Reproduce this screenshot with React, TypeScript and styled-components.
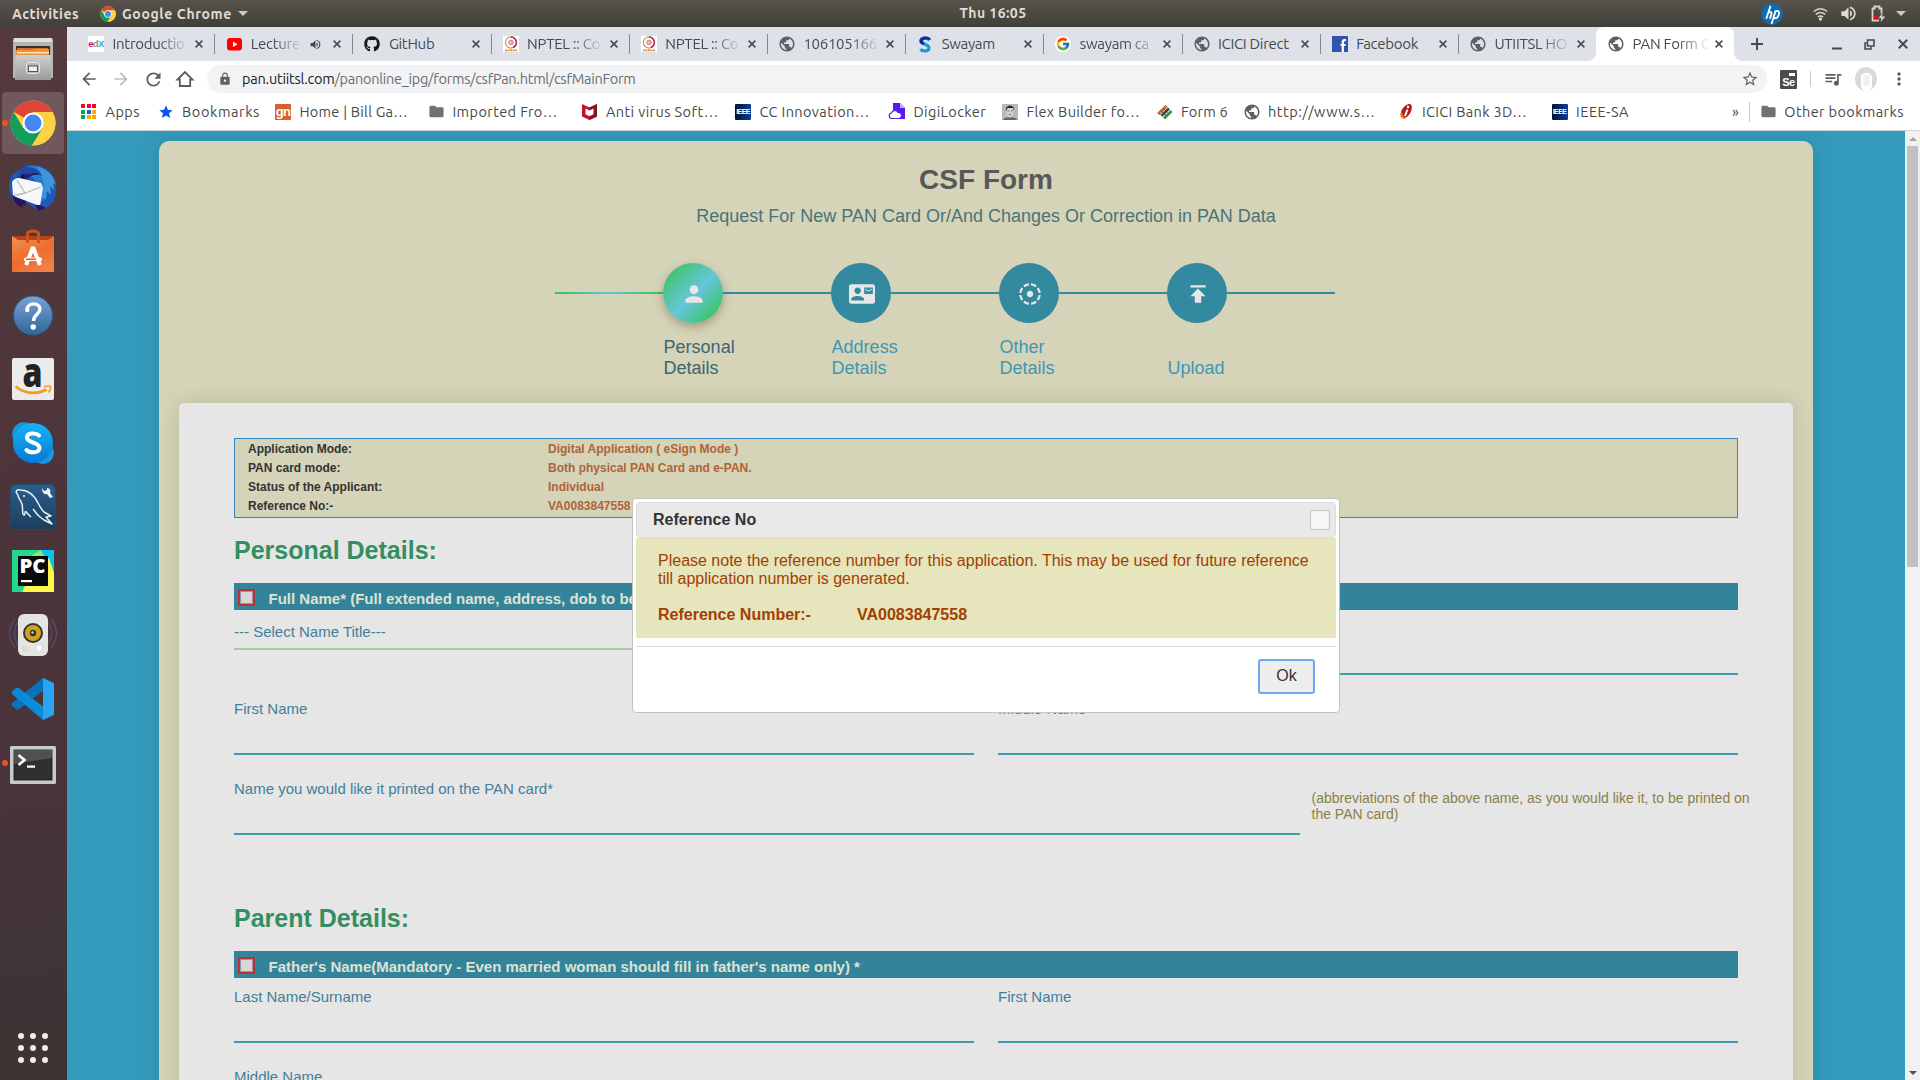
import React, { useLayoutEffect, useRef, useState } from "react";
import styled, { createGlobalStyle, css } from "styled-components";
import {
  MdPerson, MdContactMail, MdFilterTiltShift, MdPublish, MdArrowBack, MdArrowForward,
  MdRefresh, MdLock, MdStarBorder, MdQueueMusic, MdMoreVert, MdVolumeUp, MdStar, MdFolder, MdPublic,
} from "react-icons/md";
import { FaGithub } from "react-icons/fa";
import { FcGoogle } from "react-icons/fc";

const UI = `Ubuntu, "Open Sans", "Noto Sans", sans-serif`;
const SANS = `"Liberation Sans", Arial, sans-serif`;

const Global = createGlobalStyle`
  * { box-sizing: border-box; }
  body { margin: 0; overflow: hidden; font-family: ${SANS}; }
  svg { display: block; flex: none; overflow: visible; }
`;

/* ---------- shell ---------- */
const Desktop = styled.div`
  width: 1920px; height: 1080px; overflow: hidden;
  display: grid; grid-template: 27px 1053px / 67px 1853px;
`;
const TopBar = styled.header`
  grid-column: 1 / 3; display: grid; grid-template-columns: 1fr auto 1fr;
  align-items: center; padding: 0 14px 0 12px;
  background: linear-gradient(#57534b, #403f3a);
  color: #dfdbd2; font: 600 14px/20px ${UI};
`;
const BarGroup = styled.div<{ $end?: boolean }>`
  display: flex; align-items: center; height: 26px;
  justify-content: ${(p) => (p.$end ? "flex-end" : "flex-start")};
`;
const Gap = styled.span<{ $w: number }>`flex: none; width: ${(p) => p.$w}px;`;
const Caret = styled.i`
  border: 5px solid transparent; border-top: 5.5px solid #cfcbc2; border-bottom: 0;
`;
const Clock = styled.div`padding-left: 68px; height: 22px;`;

const Dock = styled.nav`
  display: flex; flex-direction: column;
  background: linear-gradient(172deg, #543a3c 0%, #4c343a 45%, #48343a 72%, #403436 88%, #3e3434 100%);
`;
const Slot = styled.div<{ $active?: boolean; $open?: boolean }>`
  position: relative; height: 64px; flex: none; display: flex; align-items: center; justify-content: center;
  padding-right: 1px;
  ${(p) => p.$active && css`
    height: 62px; margin: 1px 3px 1px 2px; border-radius: 4px; background: #6f595c; padding: 0;
  `}
  ${(p) => p.$open && css`
    &::before { content: ""; position: absolute; left: ${p.$active ? 0 : 2}px; top: calc(50% - 3px);
      width: 6px; height: 6px; border-radius: 50%; background: #e95420; }
  `}
`;
const DockTop = styled.div`display: flex; flex-direction: column; & > :last-child { padding-top: 3px; }`;
const DotGrid = styled.div`
  margin: auto 0 17px 18px; display: grid; grid-template-columns: repeat(3, 6px); gap: 6px;
  i { width: 6px; height: 6px; border-radius: 50%; background: #f0eeec; }
`;

/* ---------- browser chrome ---------- */
const Browser = styled.div`display: flex; flex-direction: column; min-width: 0;`;
const TabStrip = styled.div`
  height: 34px; flex: none; background: #dee1e8; display: flex; padding-left: 9px;
`;
const TabBox = styled.div<{ $active?: boolean; $line?: boolean }>`
  position: relative; width: 138.2px; flex: none; height: 34px; display: flex; align-items: center;
  padding: 0 11px 0 12px; font: 15px/20px ${UI}; color: #45494d;
  ${(p) => p.$line && css`
    &::after { content: ""; position: absolute; right: -1px; top: 7px; width: 1px; height: 20px; background: #84878c; }
  `}
  ${(p) => p.$active && css`
    background: #fff; border-radius: 8px 8px 0 0;
    &::before, &::after { content: ""; position: absolute; bottom: 0; width: 8px; height: 8px; }
    &::before { left: -8px; background: radial-gradient(circle at 0 0, transparent 7.5px, #fff 8px); }
    &::after { right: -8px; background: radial-gradient(circle at 100% 0, transparent 7.5px, #fff 8px); }
  `}
`;
const Favicon = styled.span`width: 16px; flex: none; display: flex; justify-content: center;`;
const TabTitle = styled.span<{ $fade?: boolean }>`
  flex: 1; min-width: 0; margin-left: 8.5px; white-space: nowrap; overflow: hidden; letter-spacing: -0.3px;
  ${(p) => p.$fade && css`mask-image: linear-gradient(90deg, #000 calc(100% - 30px), transparent);`}
`;
const WindowTools = styled.div`flex: 1; display: flex; align-items: center; color: #45494d;`;

const Toolbar = styled.div`
  height: 36px; flex: none; background: #fff; display: flex; align-items: center; color: #5a5e63; padding-left: 12px;
`;
const Omnibox = styled.div`
  width: 1560px; height: 28px; border-radius: 14px; background: #f1f3f4; display: flex; align-items: center;
  padding: 0 8px 0 11px; color: #5f6368; margin-left: 13px;
`;
const Url = styled.div`display: flex; margin-left: 10px; flex: 1; font: 14.5px/20px ${UI}; color: #6a6e73;`;
const Host = styled.span`color: #202124;`;
const SeBadge = styled.span`
  width: 17px; height: 19px; background: #4b4c4e; color: #fff; font: bold 11px/24px ${SANS}; text-align: center;
  border-radius: 1px; letter-spacing: -0.5px; position: relative;
  &::before { content: ""; position: absolute; right: 2px; top: 3px; width: 6px; height: 3px; background: #fff; }
`;
const VLine = styled.i<{ $h: number }>`width: 1px; height: ${(p) => p.$h}px; background: #c8cacd;`;
const Avatar = styled.span`
  width: 22px; height: 24px; border-radius: 50%; background: #d9d9d9; display: flex; justify-content: center; align-items: flex-end;
  overflow: hidden;
  i { width: 11px; height: 18px; border-radius: 5px 5px 6px 6px; border: 2px solid #fff; border-bottom-width: 5px; background: #eef3f6; }
`;
const Bookmarks = styled.div`
  height: 34px; flex: none; background: #fff; border-bottom: 1px solid #d0d6da; display: flex; align-items: center;
  padding: 0 14px 4px 14px; font: 14.5px/20px ${UI}; color: #45494d;
`;
const Mark = styled.div<{ $w: number }>`
  width: ${(p) => p.$w}px; flex: none; display: flex; align-items: center;
`;
const MarkIcon = styled.span`width: 24.5px; flex: none; display: flex;`;
const AppsGrid = styled.span`
  display: grid; grid-template-columns: repeat(3, 4px); gap: 1.5px;
`;
const AppsDot = styled.i<{ $c: string }>`height: 4px; background: ${(p) => p.$c};`;
const Square = styled.span<{ $bg: string; $fs: number; $fg?: string }>`
  width: 16px; height: 16px; overflow: hidden; background: ${(p) => p.$bg}; color: ${(p) => p.$fg || "#fff"};
  font: bold ${(p) => p.$fs}px/16px ${SANS}; text-align: center; letter-spacing: -0.6px; border-radius: 1px; flex: none;
`;
const Tint = styled.span<{ $c: string }>`color: ${(p) => p.$c};`;
const FitSpan = styled.span`white-space: nowrap; display: inline-block;`;

function Fit({ w, children }: { w: number; children: string }) {
  const ref = useRef<HTMLSpanElement>(null);
  const [ls, setLs] = useState(0);
  useLayoutEffect(() => {
    const el = ref.current;
    if (el) setLs((w - el.getBoundingClientRect().width) / children.length);
  }, [w, children]);
  return <FitSpan ref={ref} style={{ letterSpacing: ls }}>{children}</FitSpan>;
}

/* ---------- page ---------- */
const Viewport = styled.div`flex: 1; min-height: 0; display: flex; position: relative;`;
const Page = styled.main`
  width: 1838px; height: 949px; overflow: hidden; background: #349bbc; padding: 10px 92px 0;
`;
const Card = styled.section`
  height: 1200px; background: #d5d3b8; border-radius: 10px; padding: 24px 20px 0;
  box-shadow: 0 0 26px rgba(0, 60, 80, 0.17);
`;
const Title = styled.h1`margin: 0; text-align: center; color: #585858; font: bold 28px/30px ${SANS};`;
const Subtitle = styled.p`margin: 10px 0 0; text-align: center; color: #487378; font: 18px/22px ${SANS};`;
const Stepper = styled.div`display: flex; margin: 36px 0 24px 376px;`;
const Connector = styled.i<{ $done?: boolean }>`
  width: 108px; height: 2px; flex: none; margin-top: ${(p) => (p.$done ? 29 : 0)}px;
  background: ${(p) => (p.$done ? "linear-gradient(90deg, #37c257, #63c3dc, #37c257)" : "#33899f")};
`;
const Step = styled.div`width: 168px;`;
const StepRow = styled.div`display: flex; align-items: center;`;
const Circle = styled.span<{ $done?: boolean }>`
  width: 60px; height: 60px; flex: none; border-radius: 50%; display: flex; align-items: center; justify-content: center;
  color: #e6e7e6; font-size: 26px; background: #33899f; padding: 1px 0 0 1px;
  ${(p) => p.$done && css`
    background: linear-gradient(135deg, #3cc468 10%, #67c5da 52%, #3cc468 88%);
    box-shadow: 0 4px 10px rgba(90, 80, 50, 0.4);
  `}
`;
const StepLabel = styled.div<{ $done?: boolean }>`
  width: 90px; height: 42px; margin: 14px 0 0 0.6px; display: flex; align-items: flex-end;
  font: 18px/21px ${SANS}; color: ${(p) => (p.$done ? "#3a6675" : "#3d97b6")};
`;
const Panel = styled.div`
  height: 1000px; background: #e6e6e6; border-radius: 5px; padding: 35px 55px 0;
  box-shadow: 0 0 18px rgba(90, 85, 40, 0.2);
`;
const InfoBox = styled.dl`
  margin: 0; height: 80px; border: 1px solid #3488b8; background: #d5d3b8; padding: 1px 0 0 13px;
  display: grid; grid-template-columns: 300px 1fr; grid-auto-rows: 19px; font: bold 12px/19px ${SANS}; color: #333;
  dd { margin: 0; color: #ad6538; }
`;
const SectionTitle = styled.h2<{ $top: number }>`
  margin: ${(p) => p.$top}px 0 18px; color: #358e62; font: bold 25px/30px ${SANS};
`;
const Band = styled.div`
  height: 27px; background: #33849a; color: #dfe2d3; display: flex; align-items: flex-start; padding: 6px 4px 0;
  font: bold 15px/18px ${SANS};
`;
const Check = styled.span`
  width: 17px; height: 17px; border: 2px solid #c22f30; background: #d6d6d6; margin-right: 13.5px;
  box-shadow: inset 0 0 0 1px #8b9ba3;
`;
const BandText = styled.span`margin-top: 1px;`;
const Row = styled.div<{ $h: number }>`height: ${(p) => p.$h}px; display: flex; align-items: flex-end; gap: 24px;`;
const Field = styled.div<{ $w?: number }>`
  width: ${(p) => p.$w || 740}px; flex: none; height: 55px; border-bottom: 2px solid #429aae; color: #41809a;
  font: 15px/18px ${SANS};
`;
const Select = styled(Field)`height: 27px; margin-bottom: 25px; border-color: #adcaa0;`;
const Note = styled.div`
  width: 440px; flex: none; margin: 0 0 13px -12.5px; color: #8a8046; font: 14px/16px ${SANS};
`;
const Scroll = styled.div`
  width: 15px; background: #f1f1f1; display: flex; flex-direction: column; align-items: center; padding: 6px 0 5px;
`;
const Arrow = styled.i<{ $down?: boolean }>`
  border: 4px solid transparent;
  ${(p) => p.$down ? "border-top-color: #505050; border-bottom: 0;" : "border-bottom-color: #a3a3a3; border-top: 0;"}
`;
const Thumb = styled.i`width: 11px; height: 421px; margin: 5px 0 auto; background: #c1c1c1;`;

/* ---------- dialog ---------- */
const Dialog = styled.div`
  position: absolute; left: 565px; top: 367px; width: 708px; height: 215px; padding: 3px;
  background: #fff; border: 1px solid #c2c2c2; border-radius: 4px; color: #333; font: 16px/18px ${SANS};
`;
const DialogHead = styled.div`
  height: 36px; background: #e9e9e9; border: 1px solid #dddddd; border-radius: 4px; padding: 0 5px 0 16px;
  display: flex; align-items: center; justify-content: space-between; font-weight: bold;
`;
const CloseBox = styled.span`width: 20px; height: 20px; border: 1px solid #c5c5c5; border-radius: 3px; background: #f6f6f6;`;
const DialogBody = styled.div`
  height: 100px; background: #e7e5bb; color: #a24004; padding: 14px 22px; margin-bottom: 8px;
`;
const RefLine = styled.div`margin-top: 18px; font-weight: bold; display: grid; grid-template-columns: 199px 1fr;`;
const DialogFoot = styled.div`
  border-top: 1px solid #dddddd; padding: 12px 21px 0; display: flex; justify-content: flex-end;
`;
const OkButton = styled.button`
  width: 57px; height: 35px; border: 2px solid #6fa6f0; border-radius: 3px; background: #ededed; color: #333;
  font: 16px/18px ${SANS}; padding: 0 0 2px;
`;

/* ---------- drawings ---------- */
const ChromeLogo = ({ s }: { s: number }) => (
  <svg width={s} height={s} viewBox="0 0 48 48">
    <circle cx="24" cy="24" r="23.5" fill="#fdd045" />
    <path d="M24 24 3.7 12.2A23.5 23.5 0 0 1 44.4 12.5H24z" fill="#dc4538" />
    <path d="M3.7 12.2A23.5 23.5 0 0 0 23 47.5L33.8 29.5 24 24 14 29.5z" fill="#129e5a" />
    <path d="M24 12.5h20.4A23.5 23.5 0 0 1 23 47.5L34 29.8z" fill="#fdd045" />
    <circle cx="24" cy="24" r="11" fill="#fff" /><circle cx="24" cy="24" r="8.8" fill="#4487f3" />
  </svg>
);
const FilesIcon = () => (
  <svg width="44" height="46" viewBox="0 0 44 46">
    <path d="M3 2h38l1 6v34H2V8z" fill="#b5b5b3" /><path d="M3 2h38l1 4H2z" fill="#dededc" />
    <path d="M5 10h34v9H5z" fill="#3a3025" /><path d="M6 12h31v7H6z" fill="#d96f20" />
    <path d="M5 14h17l3-1h13v6H5z" fill="#f0913e" /><path d="M6 16h32v1.5H6z" fill="#ffe2ba" />
    <path d="M4 19h36v25H4z" fill="url(#fg)" />
    <rect x="15.500" y="26.500" width="13" height="11" rx="2.500" fill="#b5b5b5" stroke="#e5e5e5" />
    <rect x="17.500" y="30" width="9" height="5.500" fill="#eee" stroke="#555" />
    <defs><linearGradient id="fg" x2="0" y2="1"><stop stopColor="#cfcfcd" /><stop offset="1" stopColor="#9c9c9a" /></linearGradient></defs>
  </svg>
);
const BirdIcon = () => (
  <svg width="48" height="48" viewBox="0 0 48 48">
    <path d="M13 6C20 0 32 1 40 8c8 9 9 22 4 31-2 4-9 8-16 8l-8-6L4 37C-1 28-2 17 5 10z" fill="#2058b8" />
    <path d="M15 4c12-4 28 3 31 17-4 0-7-2-9-5 2 8 2 16-6 25l-4-22C24 13 18 10 12 14z" fill="#2b7cd2" />
    <path d="M27 3c10 2 18 9 20 19l-3-2 1 7-4-4 1 9-4-4-1 9-4-3c3-9 2-22-6-31z" fill="#3b96dc" />
    <path d="M10 10c2-4 2-7 9-10l-1 4c7 0 13 3 15 9-5-3-10-2-14 1-3 3-9 4-12 2z" fill="#1d4a9e" />
    <path d="M13 11c3 0 5 1 8 0 4-2 8-1 10 1-5-1-9 0-12 3-3 2-7 2-8-1z" fill="#241f6e" />
    <path d="M3 20c0-3 4-5 7-5l22 5 2 5-3 18-27-10z" fill="#f7f7f9" />
    <path d="M8 17l8 13 16-6M16 30L4 33" fill="none" stroke="#b9bcc4" strokeWidth="1.300" />
    <path d="M3 32c5 3 9 4 14 6l-1 5-3-2 1 4C8 42 4 38 3 32zM26 42h5l6 3-8 3z" fill="#2b1264" />
    <circle cx="14" cy="13.500" r="1.500" fill="#0c1430" />
  </svg>
);
const BagIcon = () => (
  <svg width="42" height="44" viewBox="0 0 42 44">
    <path d="M1 7h40l-3 4H4z" fill="#b6441a" /><path d="M0 7l6 4h30l6-4v36H0z" fill="url(#bg1)" />
    <path d="M15.500 14V5c0-4 11-4 11 0v9" fill="none" stroke="#d0521f" strokeWidth="3" />
    <path d="M14 36L20.500 19.500h1L28 36" fill="none" stroke="#fff" strokeWidth="4" />
    <rect x="12" y="28.500" width="18" height="3.500" rx="1.500" fill="#fff" /><rect x="14" y="29.500" width="10" height="1.500" fill="#e95420" />
    <defs><linearGradient id="bg1" x2="0.600" y2="1"><stop stopColor="#ee9352" /><stop offset=".6" stopColor="#ee6b2e" /><stop offset="1" stopColor="#f08043" /></linearGradient></defs>
  </svg>
);
const HelpIcon = () => (
  <svg width="42" height="42" viewBox="0 0 42 42">
    <defs><linearGradient id="hg" x2="0" y2="1"><stop stopColor="#7ba2d8" /><stop offset="1" stopColor="#2f6797" /></linearGradient></defs>
    <circle cx="21" cy="21.500" r="19.500" fill="url(#hg)" stroke="#2c5d8c" />
    <path d="M15 16c0-8 13-8 13-1 0 5-6.500 5.500-6.500 12" fill="none" stroke="#fff" strokeWidth="3.400" />
    <circle cx="21.200" cy="33" r="2.700" fill="#fff" /><circle cx="15.300" cy="16" r="2.200" fill="#fff" />
  </svg>
);
const AmazonIcon = () => (
  <svg width="42" height="42" viewBox="0 0 42 42">
    <rect width="42" height="42" rx="2" fill="#ebebeb" />
    <text x="20.500" y="29" textAnchor="middle" fontFamily="Open Sans" fontWeight="800" fontSize="40" textLength="20" lengthAdjust="spacingAndGlyphs" fill="#222">a</text>
    <path d="M3.500 28.500c10 8 22 8 31 3" fill="none" stroke="#f79a1c" strokeWidth="2.800" />
    <path d="M32 29c3-1.500 6-1 6.500-.5s0 3.500-2 6" fill="none" stroke="#f79a1c" strokeWidth="1.700" />
  </svg>
);
const SkypeIcon = () => (
  <svg width="42" height="42" viewBox="0 0 42 42">
    <defs><linearGradient id="sg" x2="0" y2="1"><stop stopColor="#14b5f5" /><stop offset="1" stopColor="#0878d4" /></linearGradient></defs>
    <circle cx="12" cy="12" r="11.800" fill="#149ada" /><circle cx="31" cy="31" r="10.800" fill="#1799dd" /><circle cx="21" cy="21" r="20" fill="url(#sg)" />
    <path d="M27 13.500c-3-3-12-3-12 2 0 6 12.500 4 12.500 10.500 0 5-9.500 5.500-13 2" fill="none" stroke="#fff" strokeWidth="4" strokeLinecap="round" />
  </svg>
);
const MysqlIcon = () => (
  <svg width="46" height="46" viewBox="0 0 46 46">
    <defs><linearGradient id="mg" x2="0" y2="1"><stop stopColor="#2a5f8d" /><stop offset="1" stopColor="#1b3e5c" /></linearGradient></defs>
    <rect x=".5" y=".5" width="45" height="45" rx="5" fill="url(#mg)" stroke="#234b6c" />
    <path d="M21 33l-4-4c-1-2-2-2-2 0s-1 3-2 1c-1-4 0-7-1-10s-4-6-4-9c-3-3-2-6 2-5 9 0 15 7 18 13 2 4 4 7 6 9l7 4-5 1 6 7-8-4-4-3c-4-3-5-6-7-8" fill="none" stroke="#e8f1f6" strokeWidth="1.500" strokeLinejoin="round" />
    <circle cx="14" cy="12" r="1" fill="#fff" />
    <path d="M32 4l2 3 3-1 0-2c3 0 4 3 3 5l3 4-3 1-3-4c-3 1-5-2-5-6z" fill="#f1f5f8" />
  </svg>
);
const PycharmIcon = () => (
  <svg width="42" height="42" viewBox="0 0 42 42">
    <path d="M0 0h42v42H0z" fill="#22d88f" /><path d="M28 0h14v22z" fill="#07c3f2" /><path d="M20 5l9-5 9 18-12 6z" fill="#8ee874" />
    <path d="M10 42l6-12L37 8l5 15v19z" fill="#fcf84a" />
    <rect x="6" y="6" width="30" height="30" fill="#0a0a0a" />
    <text x="7.500" y="23" fontFamily="Open Sans" fontWeight="800" fontSize="18.500" textLength="26" lengthAdjust="spacingAndGlyphs" fill="#fff">PC</text>
    <rect x="9" y="30" width="11" height="2.200" fill="#fff" />
  </svg>
);
const SpeakerIcon = () => (
  <svg width="48" height="44" viewBox="0 0 48 44">
    <path d="M6 6q-11 14 0 29M9.500 8q-8 12 0 25M42 6q11 14 0 29M38.500 8q8 12 0 25" fill="none" stroke="#53608c" strokeWidth="1.300" opacity=".6" />
    <rect x="9" y="1" width="30" height="42" rx="6" fill="#e4e4e2" />
    <circle cx="24" cy="20" r="10" fill="#333" /><circle cx="24" cy="20" r="8" fill="#d0a418" /><circle cx="24" cy="20" r="3.200" fill="#333" /><circle cx="23.500" cy="19.500" r="1.200" fill="#ccd" />
    <circle cx="30" cy="35" r="3.500" fill="#fafafa" stroke="#bbb" strokeWidth=".5" />
    <rect x="14" y="34" width="4" height="4" fill="none" stroke="#ccc" strokeWidth=".7" />
  </svg>
);
const CodeIcon = () => (
  <svg width="42" height="42" viewBox="0 0 42 42">
    <path d="M31 0l1 12L6 32 0 28v-3z" fill="#0a72bb" /><path d="M4 10L0 13.500v2.500L31 42l2-12L6 9.500z" fill="#0b8ad8" />
    <path d="M31 0l11 5v32l-11 5z" fill="#29a5f2" />
  </svg>
);
const TerminalIcon = () => (
  <svg width="46" height="38" viewBox="0 0 46 38">
    <rect width="46" height="38" rx="1.500" fill="#c9c9c7" /><rect x="4" y="4" width="38" height="30" fill="#2e3032" stroke="#111" strokeWidth=".8" />
    <path d="M4 4h38v8L4 18z" fill="#4e5052" />
    <path d="M8.500 9l6 5-6 5" fill="none" stroke="#fff" strokeWidth="2.600" /><rect x="17" y="19.500" width="8" height="2.200" fill="#fff" />
  </svg>
);
const GlobeWrap = styled.span`display: flex; margin: -1px; color: #5d6166;`;
const Globe = () => <GlobeWrap><MdPublic size={18} /></GlobeWrap>;
const Edx = () => (
  <Square $bg="#fff" $fs={9.5} $fg="#c2186c">e<Tint $c="#8a8d90">d</Tint><Tint $c="#2aa5dc">X</Tint></Square>
);
const Youtube = () => (
  <svg width="15" height="15" viewBox="0 0 15 15"><rect y="1" width="15" height="12.500" rx="3" fill="#f00" /><path d="M6 4.500l4.500 2.800L6 10z" fill="#fff" /></svg>
);
const Nptel = () => (
  <svg width="16" height="16" viewBox="0 0 16 16"><path fill="#fff" d="M0 0h16v16H0z" /><circle cx="8" cy="6.500" r="5.600" fill="none" stroke="#d08a4c" strokeWidth="1.100" /><path d="M8 1a5.500 5.500 0 0 1 2 10.500" fill="none" stroke="#c22156" strokeWidth="1.500" /><circle cx="8" cy="6.500" r="2.300" fill="#e8b9b4" stroke="#c26a70" strokeWidth=".8" /><path d="M2 14.300h12" stroke="#e08a3c" strokeWidth="1.800" strokeDasharray="2 .5" /></svg>
);
const SwayamIcon = () => (
  <svg width="12" height="17" viewBox="0 0 12 17"><path d="M10.500 4C9 1 2 1.500 2 5c0 4 8 2.500 8 7 0 3.500-6.500 4-8.500 1" fill="none" stroke="#1b9ae0" strokeWidth="3.200" /><path d="M10.500 4C9 1 2 1.500 2 5c0 1.500 1 2 3 2.500" fill="none" stroke="#0a2fa6" strokeWidth="3.200" /></svg>
);
const GoogleFav = () => <svg width="16" height="16" viewBox="0 0 16 16"><circle cx="8" cy="8" r="8" fill="#fff" /><FcGoogle x="0.5" y="0.5" size={15} /></svg>;
const FacebookFav = () => (
  <svg width="16" height="16" viewBox="0 0 16 16"><path d="M0 0h16v16H0z" fill="#2f55ac" /><path d="M14 4.200h-1.500c-1.300 0-1.700.6-1.700 1.800V16M8.500 9h5" fill="none" stroke="#fff" strokeWidth="2.200" /></svg>
);
const Cross = ({ s = 8 }: { s?: number }) => (
  <svg width={s} height={s} viewBox="0 0 8 8"><path d="M.6.600l6.800 6.800M7.400.600L.6 7.400" stroke="#45494d" strokeWidth="1.500" /></svg>
);
const Mcafee = () => (
  <svg width="15" height="16" viewBox="0 0 15 16"><path d="M0 0l7.500 3.500L15 0v12.500L7.500 16 0 12.500z" fill="#c8102e" /><path d="M15 0v12.500L7.500 16V3.500z" fill="#8f1022" /><path d="M3.500 4.500l4 2 4-2v5.800l-4 1.900-4-1.900z" fill="#fff" /></svg>
);
const Digi = () => (
  <svg width="17" height="17" viewBox="0 0 17 17"><path d="M4 0h7l5 5v11H4z" fill="#5a17ee" /><path d="M11 0v5h5z" fill="#c6b3fb" /><path d="M2.500 15.500a2.800 2.800 0 0 1 0-5.500A3.500 3.500 0 0 1 9 9.500a3 3 0 0 1 1 6z" fill="#fff" stroke="#5a17ee" strokeWidth="1.200" /></svg>
);
const Face = () => (
  <svg width="16" height="16" viewBox="0 0 16 16"><path d="M0 0h16v16H0z" fill="#b9b9b9" /><ellipse cx="8" cy="7.500" rx="3.600" ry="5.500" fill="#d0d0d0" /><path d="M4 7C2.500 0 13.500 0 12 7l-1-3H5.500z" fill="#262626" /><path d="M1 16c1-3 4-2.500 7-2.500s6-.5 7 2.500z" fill="#666" /><path d="M5.500 7h1.500M9 7h1.500M7 10.500h2" stroke="#555" strokeWidth=".8" /></svg>
);
const Voter = () => (
  <svg width="16" height="16" viewBox="0 0 16 16"><path d="M0 9L8.500 1l2.500 2-8 8z" fill="#c9703d" /><path d="M3.500 11L11 3.500l2 2L5.500 13z" fill="#444" /><path d="M6 13.500L13.500 6l2 2L8 15.500z" fill="#36914c" /><path d="M3 10.500L10.500 3M5.500 13L13 5.500" stroke="#eee" strokeWidth=".6" /><path d="M1.500 9l1.500 1.500M4 6.500l5 5M6.500 4.500l4 4" stroke="#333" strokeWidth="1" /></svg>
);
const Icici = () => (
  <svg width="16" height="17" viewBox="0 0 16 17"><path d="M4 14C0 9 7 1 12 1c4 1 1 12-5 14z" fill="#b8151b" /><path d="M2 11c0 3 2 5 5 5l2-2C6 15 4 13 4 9z" fill="#f08a24" /><circle cx="10" cy="4" r="1.200" fill="#fff" /><path d="M9.500 6.500L7 13" stroke="#fff" strokeWidth="2" /></svg>
);
const HomeIcon = () => (
  <svg width="18" height="18" viewBox="0 0 18 18"><path d="M1.500 9.500L9 2l7.500 7.500h-2.300V16H3.800V9.500z" fill="none" stroke="#5a5e63" strokeWidth="1.800" /></svg>
);
const HpLogo = () => (
  <svg width="22" height="22" viewBox="0 0 23 23"><circle cx="11.500" cy="11.500" r="11.200" fill="#0d6cb4" /><path d="M5.500 16.500L10 3M7.500 10.500c3-2.500 4-.5 3.300 1.500l-1.500 4.500M15.200 8.500L11 22M14.500 8.700c4-1.200 5 0 4 3.500-1 4-3 4-5 3.400" fill="none" stroke="#fff" strokeWidth="1.900" /></svg>
);
const Wifi = () => (
  <svg width="15" height="14" viewBox="0 0 15 14"><path d="M.8 4.500Q7.500-1 14.200 4.500M2.800 7.300Q7.500 3.500 12.200 7.300M4.800 10Q7.500 7.800 10.200 10" fill="none" stroke="#d8d4cb" strokeWidth="1.500" /><circle cx="7.500" cy="12" r="1.700" fill="#d8d4cb" /></svg>
);
const Battery = () => (
  <svg width="16" height="18" viewBox="0 0 16 18"><path d="M9 15.500H2.500v-12h2v-2h5v2h2v5" fill="none" stroke="#d8d4cb" strokeWidth="1.800" /><path d="M4 11h4v3.500H4z" fill="#d11" /><path d="M12.500 8l-4 5.200h3l-1 4 4.800-5.700H12z" fill="#d8d4cb" /></svg>
);

/* ---------- data ---------- */
const tabs = [
  { t: "Introductio", i: <Edx />, fade: true }, { t: "Lecture", i: <Youtube />, fade: true, sound: true },
  { t: "GitHub", i: <FaGithub size={16} color="#191717" /> }, { t: "NPTEL :: Co", i: <Nptel />, fade: true },
  { t: "NPTEL :: Co", i: <Nptel />, fade: true }, { t: "106105166", i: <Globe />, fade: true },
  { t: "Swayam", i: <SwayamIcon /> }, { t: "swayam ca", i: <GoogleFav />, fade: true },
  { t: "ICICI Direct", i: <Globe /> }, { t: "Facebook", i: <FacebookFav /> },
  { t: "UTIITSL HO", i: <Globe />, fade: true }, { t: "PAN Form C", i: <Globe />, fade: true },
];
const appColors = ["#f03", "#f03", "#f03", "#00a650", "#0a64f0", "#fa0", "#00a650", "#fa0", "#fa0"];
const ieee = <Square $bg="linear-gradient(90deg,#02122f,#0b3d9c)" $fs={7}>IEEE</Square>;
const marks = [
  { w: 76.5, t: "Apps", tw: 34.5, i: <AppsGrid>{appColors.map((c, k) => <AppsDot key={k} $c={c} />)}</AppsGrid> },
  { w: 117.5, t: "Bookmarks", tw: 78, i: <MdStar size={16} color="#0b57f0" /> },
  { w: 153, t: "Home | Bill Ga…", tw: 108.5, i: <Square $bg="#d9602c" $fs={13}>gn</Square> },
  { w: 153.5, t: "Imported Fro…", tw: 105, i: <MdFolder size={17} color="#6e7276" /> },
  { w: 153.500, t: "Anti virus Soft…", tw: 112.5, i: <Mcafee /> },
  { w: 154, t: "CC Innovation…", tw: 110, i: ieee },
  { w: 113, t: "DigiLocker", tw: 72.5, i: <Digi /> },
  { w: 154.500, t: "Flex Builder fo…", tw: 113.5, i: <Face /> },
  { w: 87, t: "Form 6", tw: 47, i: <Voter /> },
  { w: 154, t: "http://www.s…", tw: 107.5, i: <Globe /> },
  { w: 154, t: "ICICI Bank 3D…", tw: 105, i: <Icici /> },
  { w: 180.500, t: "IEEE-SA", tw: 53, i: ieee },
];
const steps = [
  { l: "Personal Details", i: <MdPerson />, done: true }, { l: "Address Details", i: <MdContactMail /> },
  { l: "Other Details", i: <MdFilterTiltShift /> }, { l: "Upload", i: <MdPublish /> },
];
const info = [
  ["Application Mode:", "Digital Application ( eSign Mode )"], ["PAN card mode:", "Both physical PAN Card and e-PAN."],
  ["Status of the Applicant:", "Individual"], ["Reference No:-", "VA0083847558"],
];

export default function App() {
  return (
    <Desktop>
      <Global />
      <TopBar>
        <BarGroup>
          <Fit w={67}>Activities</Fit><Gap $w={21} /><ChromeLogo s={16} /><Gap $w={6} />
          <Fit w={110}>Google Chrome</Fit><Gap $w={6} /><Caret />
        </BarGroup>
        <Clock><Fit w={67}>Thu 16:05</Fit></Clock>
        <BarGroup $end>
          <HpLogo /><Gap $w={30} /><Wifi /><Gap $w={11} /><MdVolumeUp size={19} /><Gap $w={12} /><Battery /><Gap $w={10} /><Caret />
        </BarGroup>
      </TopBar>

      <Dock>
        <DockTop>
          <Slot><FilesIcon /></Slot>
          <Slot $active $open><ChromeLogo s={46} /></Slot>
          <Slot><BirdIcon /></Slot><Slot><BagIcon /></Slot><Slot><HelpIcon /></Slot><Slot><AmazonIcon /></Slot>
          <Slot><SkypeIcon /></Slot><Slot><MysqlIcon /></Slot><Slot><PycharmIcon /></Slot><Slot><SpeakerIcon /></Slot>
          <Slot><CodeIcon /></Slot><Slot $open><TerminalIcon /></Slot>
        </DockTop>
        <DotGrid>{Array.from({ length: 9 }, (_, k) => <i key={k} />)}</DotGrid>
      </Dock>

      <Browser>
        <TabStrip>
          {tabs.map((t, k) => (
            <TabBox key={k} $active={k === 11} $line={k < 10}>
              <Favicon>{t.i}</Favicon>
              <TabTitle $fade={t.fade}>{t.t}</TabTitle>
              {t.sound && <><Gap $w={6} /><MdVolumeUp size={13} /><Gap $w={5} /></>}
              <Gap $w={6} /><Cross />
            </TabBox>
          ))}
          <WindowTools>
            <Gap $w={16.5} />
            <svg width="12" height="12" viewBox="0 0 12 12"><path d="M6 0v12M0 6h12" stroke="#45494d" strokeWidth="1.900" /></svg>
            <Gap $w={69} />
            <svg width="10" height="12" viewBox="0 0 10 12"><path d="M0 10.500h10" stroke="#45494d" strokeWidth="2" /></svg>
            <Gap $w={22} />
            <svg width="11" height="11" viewBox="0 0 11 11"><path d="M3.500 1h6.500v6H3.500zM2.500 4H1v6h6V8" fill="none" stroke="#45494d" strokeWidth="1.600" /></svg>
            <Gap $w={23} /><Cross s={10} />
          </WindowTools>
        </TabStrip>
        <Toolbar>
          <MdArrowBack size={20} /><Gap $w={12} /><MdArrowForward size={20} color="#bbbdc1" /><Gap $w={11.5} />
          <MdRefresh size={21} /><Gap $w={12.500} /><HomeIcon />
          <Omnibox>
            <MdLock size={14} />
            <Url><Host><Fit w={92.500}>pan.utiitsl.com</Fit></Host><Fit w={301}>/panonline_ipg/forms/csfPan.html/csfMainForm</Fit></Url>
            <MdStarBorder size={18} />
          </Omnibox>
          <Gap $w={13} /><SeBadge>Se</SeBadge><Gap $w={13} /><VLine $h={16} /><Gap $w={12} />
          <MdQueueMusic size={20} /><Gap $w={12} /><Avatar><i /></Avatar><Gap $w={12} /><MdMoreVert size={20} />
        </Toolbar>
        <Bookmarks>
          {marks.map((m, k) => (
            <Mark key={k} $w={m.w}><MarkIcon>{m.i}</MarkIcon><Fit w={m.tw}>{m.t}</Fit></Mark>
          ))}
          <span>»</span><Gap $w={10} /><VLine $h={20} /><Gap $w={10} />
          <MarkIcon><MdFolder size={17} color="#6e7276" /></MarkIcon><Fit w={119.500}>Other bookmarks</Fit>
        </Bookmarks>

        <Viewport>
          <Page>
            <Card>
              <Title>CSF Form</Title>
              <Subtitle>Request For New PAN Card Or/And Changes Or Correction in PAN Data</Subtitle>
              <Stepper>
                <Connector $done />
                {steps.map((s) => (
                  <Step key={s.l}>
                    <StepRow><Circle $done={s.done}>{s.i}</Circle><Connector /></StepRow>
                    <StepLabel $done={s.done}>{s.l}</StepLabel>
                  </Step>
                ))}
              </Stepper>
              <Panel>
                <InfoBox>
                  {info.map(([a, b]) => <React.Fragment key={a}><dt>{a}</dt><dd>{b}</dd></React.Fragment>)}
                </InfoBox>
                <SectionTitle $top={17}>Personal Details:</SectionTitle>
                <Band><Check /><BandText>Full Name* (Full extended name, address, dob to be</BandText></Band>
                <Row $h={65}><Select>--- Select Name Title---</Select><Field /></Row>
                <Row $h={80}><Field>First Name</Field><Field>Middle Name</Field></Row>
                <Row $h={80}>
                  <Field $w={1066}>Name you would like it printed on the PAN card*</Field>
                  <Note>(abbreviations of the above name, as you would like it, to be printed on the PAN card)</Note>
                </Row>
                <SectionTitle $top={68}>Parent Details:</SectionTitle>
                <Band><Check /><BandText>Father's Name(Mandatory - Even married woman should fill in father's name only) *</BandText></Band>
                <Row $h={65}><Field>Last Name/Surname</Field><Field>First Name</Field></Row>
                <Row $h={80}><Field>Middle Name</Field></Row>
              </Panel>
            </Card>
          </Page>
          <Scroll><Arrow /><Thumb /><Arrow $down /></Scroll>
          <Dialog>
            <DialogHead>Reference No<CloseBox /></DialogHead>
            <DialogBody>
              Please note the reference number for this application. This may be used for future reference till application number is generated.
              <RefLine><span>Reference Number:-</span><span>VA0083847558</span></RefLine>
            </DialogBody>
            <DialogFoot><OkButton>Ok</OkButton></DialogFoot>
          </Dialog>
        </Viewport>
      </Browser>
    </Desktop>
  );
}
